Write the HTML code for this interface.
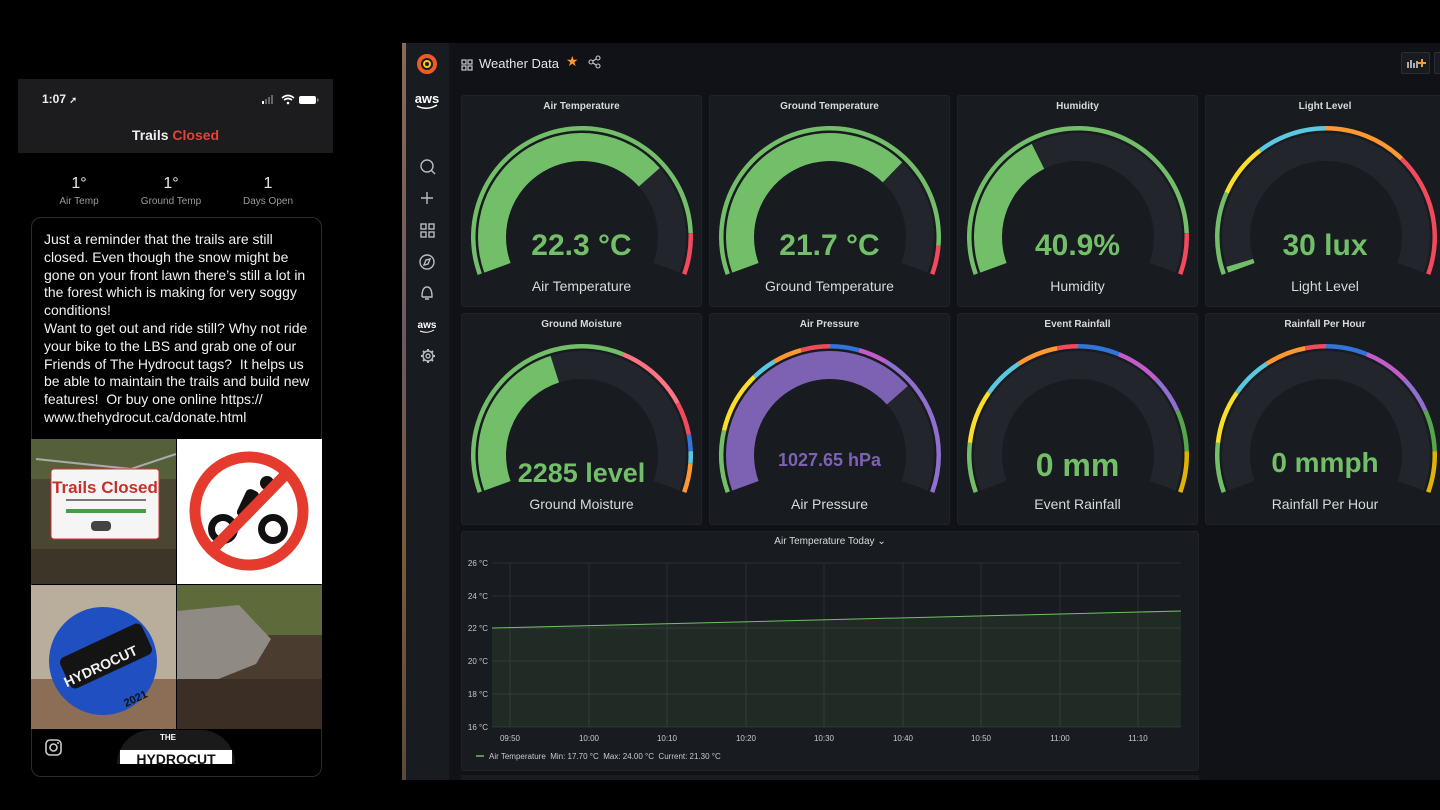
<!DOCTYPE html>
<html><head><meta charset="utf-8">
<style>
*{margin:0;padding:0;box-sizing:border-box}
body{width:1440px;height:810px;background:#000;position:relative;overflow:hidden;font-family:"Liberation Sans",sans-serif}
.abs{position:absolute}
.phone-top{left:18px;top:79px;width:315px;height:74px;background:#1c1c1e}
.stat{color:#e8e8e8;text-align:center;font-size:16px;line-height:16px}
.stat small{display:block;font-size:10px;color:#9a9a9a;margin-top:2px}
.card{left:31px;top:217px;width:291px;height:560px;border:1px solid #2c2c2e;border-radius:10px;background:#000}
.post{left:44px;top:231px;width:275px;color:#f2f2f2;font-size:14px;line-height:17.8px}
.gf{left:406px;top:43px;width:1034px;height:737px;background:#111217}
.side{left:406px;top:43px;width:43px;height:737px;background:#181b1f}
.panel{background:#181b1f;border:1px solid #202226;border-radius:3px;position:absolute}
.ptitle{position:absolute;top:5px;left:0;right:0;text-align:center;color:#d8d9da;font-size:10px;font-weight:bold}
</style></head><body>
<!-- phone -->
<div class="abs phone-top"></div>
<div class="abs" style="left:42px;top:92px;color:#eee;font-size:12px;font-weight:bold">1:07 <span style="font-size:9px">➚</span></div>
<div class="abs" style="left:262px;top:93px;">
<svg width="60" height="12"><rect x="0" y="7" width="2" height="3" fill="#fff"/><rect x="3" y="5" width="2" height="5" fill="#666"/><rect x="6" y="3" width="2" height="7" fill="#666"/><rect x="9" y="1" width="2" height="9" fill="#666"/>
<path d="M20 4 Q26 -1 32 4 M22 6 Q26 3 30 6" stroke="#fff" stroke-width="1.6" fill="none"/><circle cx="26" cy="9" r="1.3" fill="#fff"/>
<rect x="37" y="2" width="17" height="8" rx="2" fill="#fff"/><rect x="55" y="4.5" width="1.5" height="3" fill="#888"/></svg></div>
<div class="abs" style="left:18px;width:315px;top:127px;text-align:center;font-size:14px;font-weight:bold;color:#eee">Trails <span style="color:#e8403a">Closed</span></div>
<div class="abs stat" style="left:49px;width:60px;top:176px">1°<small>Air Temp</small></div>
<div class="abs stat" style="left:131px;width:80px;top:176px">1°<small>Ground Temp</small></div>
<div class="abs stat" style="left:233px;width:70px;top:176px">1<small>Days Open</small></div>
<div class="abs card"></div>
<div class="abs post">Just a reminder that the trails are still closed. Even though the snow might be gone on your front lawn there’s still a lot in the forest which is making for very soggy conditions!<br>Want to get out and ride still? Why not ride your bike to the LBS and grab one of our Friends of The Hydrocut tags?&nbsp; It helps us be able to maintain the trails and build new features!&nbsp; Or buy one online https://<br>www.thehydrocut.ca/donate.html</div>
<svg class="abs" style="left:31px;top:439px" width="291" height="290">
<rect width="145" height="145" fill="#4a4632"/><rect y="0" width="145" height="40" fill="#55603a"/><rect y="110" width="145" height="35" fill="#3d3528"/>
<path d="M5 20 L100 30 L145 15" stroke="#aaa" stroke-width="2" fill="none"/>
<rect x="20" y="30" width="108" height="70" rx="3" fill="#f5f5f5" stroke="#c33" stroke-width="1"/>
<text x="74" y="54" fill="#c8302c" font-size="17" font-weight="bold" text-anchor="middle" font-family="Liberation Sans">Trails Closed</text>
<rect x="35" y="70" width="80" height="4" fill="#4a9a4a"/><rect x="35" y="60" width="80" height="2" fill="#777"/><rect x="60" y="82" width="20" height="10" rx="4" fill="#444"/>
<rect x="146" width="145" height="145" fill="#fff"/>
<circle cx="218" cy="72" r="54" fill="none" stroke="#e53a2e" stroke-width="11"/>
<circle cx="192" cy="90" r="15" fill="#111"/><circle cx="242" cy="90" r="15" fill="#111"/><circle cx="192" cy="90" r="8" fill="#fff"/><circle cx="242" cy="90" r="8" fill="#fff"/>
<rect x="210" y="50" width="14" height="30" rx="5" fill="#111" transform="rotate(25 217 65)"/><circle cx="236" cy="44" r="7" fill="#111"/>
<line x1="180" y1="112" x2="258" y2="32" stroke="#e53a2e" stroke-width="11"/>
<rect y="146" width="145" height="144" fill="#b9ad9c"/><rect y="240" width="145" height="50" fill="#8c6e56"/>
<circle cx="72" cy="222" r="54" fill="#1f4fc0"/><rect x="30" y="200" width="90" height="34" rx="6" fill="#141414" transform="rotate(-25 75 217)"/>
<text x="70" y="232" fill="#f0f0f0" font-size="14" font-weight="bold" text-anchor="middle" transform="rotate(-25 70 228)" font-family="Liberation Sans">HYDROCUT</text>
<text x="95" y="268" fill="#111" font-size="11" font-weight="bold" transform="rotate(-25 95 268)" font-family="Liberation Sans">2021</text>
<rect x="146" y="146" width="145" height="144" fill="#4a3d30"/><rect x="146" y="146" width="145" height="50" fill="#5f6a3a"/>
<path d="M146 172 L208 166 L240 200 L225 225 L175 245 L146 240Z" fill="#8f8a84"/><rect x="146" y="240" width="145" height="50" fill="#3b2f25"/>
</svg>
<svg class="abs" style="left:44px;top:738px" width="20" height="20"><rect x="2" y="2" width="15" height="15" rx="4" fill="none" stroke="#ccc" stroke-width="1.6"/><circle cx="9.5" cy="9.5" r="3.5" fill="none" stroke="#ccc" stroke-width="1.6"/><circle cx="14" cy="5" r="1" fill="#ccc"/></svg>
<div class="abs" style="left:117px;top:730px;width:118px;height:34px;background:#1a1a1a;border-radius:40px 40px 0 0"></div>
<div class="abs" style="left:160px;top:733px;color:#fff;font-size:8px;font-weight:bold">THE</div>
<div class="abs" style="left:120px;top:750px;width:112px;height:14px;background:#fff;color:#111;font-size:14px;font-weight:bold;text-align:center;line-height:18px;overflow:hidden">HYDROCUT</div>

<!-- grafana -->
<div class="abs" style="left:402px;top:43px;width:4px;height:737px;background:linear-gradient(#8a6a55,#6a5a60 40%,#7b5a3a 70%,#5a4a3a)"></div>
<div class="abs gf"></div>
<div class="abs side"></div>
<svg class="abs" style="left:406px;top:43px" width="43" height="330">
<circle cx="21" cy="21" r="8" fill="none" stroke="#f05a28" stroke-width="4"/><circle cx="21" cy="21" r="3" fill="none" stroke="#fbca0a" stroke-width="2"/>
<text x="21" y="60" fill="#fff" font-size="13" font-weight="bold" text-anchor="middle" font-family="Liberation Sans">aws</text>
<path d="M11 63 Q21 68 31 62" stroke="#fff" stroke-width="1.5" fill="none"/>
<g stroke="#b9bcc2" stroke-width="1.4" fill="none">
<circle cx="21" cy="123" r="6"/><line x1="25.5" y1="127.5" x2="29" y2="131"/>
<path d="M21 149 V161 M15 155 H27"/>
<rect x="15" y="181" width="5" height="5"/><rect x="23" y="181" width="5" height="5"/><rect x="15" y="189" width="5" height="5"/><rect x="23" y="189" width="5" height="5"/>
<circle cx="21" cy="219" r="7"/><path d="M24 216 L22 221 L18 222 L20 217Z"/>
<path d="M16 254 Q16 244 21 244 Q26 244 26 254 H16 M19 256 H23"/>
<circle cx="22" cy="313" r="5"/><circle cx="22" cy="313" r="2"/>
<path d="M22 306 V308 M22 318 V320 M15 313 H17 M27 313 H29 M17 308 L18.5 309.5 M25.5 316.5 L27 318 M27 308 L25.5 309.5 M18.5 316.5 L17 318" stroke-width="2"/>
</g>
<text x="21" y="285" fill="#fff" font-size="10" font-weight="bold" text-anchor="middle" font-family="Liberation Sans">aws</text>
<path d="M14 288 Q21 291 28 287" stroke="#fff" stroke-width="1" fill="none"/>
</svg>
<svg class="abs" style="left:460px;top:58px" width="14" height="14"><g fill="none" stroke="#c7c9cd" stroke-width="1.2"><rect x="2" y="2" width="4" height="4"/><rect x="8" y="2" width="4" height="4"/><rect x="2" y="8" width="4" height="4"/><rect x="8" y="8" width="4" height="4"/></g></svg>
<div class="abs" style="left:479px;top:56px;color:#e4e5e7;font-size:13px">Weather Data</div>
<div class="abs" style="left:566px;top:53px;color:#ff9830;font-size:14px">★</div>
<svg class="abs" style="left:588px;top:55px" width="14" height="14"><g fill="none" stroke="#c7c9cd" stroke-width="1.1"><circle cx="3" cy="7" r="2"/><circle cx="10" cy="3" r="2"/><circle cx="10" cy="11" r="2"/><path d="M5 6 L8 4 M5 8 L8 10"/></g></svg>
<div class="abs" style="left:1401px;top:52px;width:29px;height:22px;border:1px solid #2a2d33;border-radius:2px;background:#181b1f"></div>
<div class="abs" style="left:1434px;top:52px;width:10px;height:22px;border:1px solid #2a2d33;border-radius:2px;background:#181b1f"></div>
<svg class="abs" style="left:1406px;top:57px" width="20" height="12"><g fill="#aaa"><rect x="1" y="5" width="2" height="6"/><rect x="4" y="3" width="2" height="8"/><rect x="7" y="6" width="2" height="5"/><rect x="10" y="4" width="2" height="7"/></g><path d="M16 2 V10 M12 6 H20" stroke="#ff9830" stroke-width="2"/></svg>

<div id="gauges"></div>

<!-- graph -->
<div class="panel" style="left:461px;top:531px;width:738px;height:240px"></div>
<div class="abs" style="left:461px;width:738px;top:536px;text-align:center;color:#d8d9da;font-size:10px">Air Temperature Today ⌄</div>
<svg class="abs" style="left:461px;top:531px" width="738" height="240">
<g stroke="#2c2e33" stroke-width="1">
<line x1="31" y1="32" x2="720" y2="32"/><line x1="31" y1="65" x2="720" y2="65"/><line x1="31" y1="97" x2="720" y2="97"/><line x1="31" y1="130" x2="720" y2="130"/><line x1="31" y1="163" x2="720" y2="163"/><line x1="31" y1="196" x2="720" y2="196"/>
<line x1="49" y1="32" x2="49" y2="196"/><line x1="128" y1="32" x2="128" y2="196"/><line x1="206" y1="32" x2="206" y2="196"/><line x1="285" y1="32" x2="285" y2="196"/><line x1="363" y1="32" x2="363" y2="196"/><line x1="442" y1="32" x2="442" y2="196"/><line x1="520" y1="32" x2="520" y2="196"/><line x1="599" y1="32" x2="599" y2="196"/><line x1="677" y1="32" x2="677" y2="196"/>
</g>
<path d="M31 97 L720 80 L720 196 L31 196Z" fill="#73bf69" fill-opacity="0.1"/>
<path d="M31 97 L720 80" stroke="#73bf69" stroke-width="1"/>
<g fill="#c7c9cd" font-size="8" font-family="Liberation Sans" text-anchor="end">
<text x="27" y="35">26 °C</text><text x="27" y="68">24 °C</text><text x="27" y="100">22 °C</text><text x="27" y="133">20 °C</text><text x="27" y="166">18 °C</text><text x="27" y="199">16 °C</text></g>
<g fill="#c7c9cd" font-size="8" font-family="Liberation Sans" text-anchor="middle">
<text x="49" y="210">09:50</text><text x="128" y="210">10:00</text><text x="206" y="210">10:10</text><text x="285" y="210">10:20</text><text x="363" y="210">10:30</text><text x="442" y="210">10:40</text><text x="520" y="210">10:50</text><text x="599" y="210">11:00</text><text x="677" y="210">11:10</text></g>
<line x1="15" y1="225" x2="23" y2="225" stroke="#73bf69" stroke-width="1.5"/>
<text x="28" y="228" fill="#c7c9cd" font-size="8" font-family="Liberation Sans">Air Temperature&#160; Min: 17.70 °C&#160; Max: 24.00 °C&#160; Current: 21.30 °C</text>
</svg>
<div class="abs" style="left:461px;top:775px;width:738px;height:5px;background:#181b1f"></div>

<script>
var G="#73bf69",R="#f2495c",Y="#fade2a",C="#5ac8e0",O="#ff9830",B="#3274d9",M="#c15cc8",P="#8f6fcf",PK="#ff7383",DG="#56a64b",DY="#e0b400";
var rain=[[.12,G],[.25,Y],[.35,C],[.45,O],[.5,R],[.6,B],[.71,M],[.8,P],[.9,DG],[1,DY]];
var gs=[
[461,95,"Air Temperature","22.3 °C",G,.72,[[.9,G],[1,R]],30,"Air Temperature",0],
[709,95,"Ground Temperature","21.7 °C",G,.70,[[.93,G],[1,R]],30,"Ground Temperature",0],
[957,95,"Humidity","40.9%",G,.38,[[.9,G],[1,R]],30,"Humidity",0],
[1205,95,"Light Level","30 lux",G,.015,[[.2,G],[.33,Y],[.5,C],[.7,O],[1,R]],30,"Light Level",0],
[461,313,"Ground Moisture","2285 level",G,.42,[[.6,G],[.78,PK],[.86,R],[.9,B],[.93,C],[1,O]],27,"Ground Moisture",9],
[709,313,"Air Pressure","1027.65 hPa","#7d62b3",.72,[[.15,G],[.3,Y],[.36,C],[.43,O],[.5,R],[.57,B],[.64,M],[1,P]],18,"Air Pressure",-4],
[957,313,"Event Rainfall","0 mm",G,0,rain,32,"Event Rainfall",1],
[1205,313,"Rainfall Per Hour","0 mmph",G,0,rain,28,"Rainfall Per Hour",-1]
];
function pt(cx,cy,r,t){var a=(200-220*t)*Math.PI/180;return [cx+r*Math.cos(a),cy-r*Math.sin(a)];}
function sec(cx,cy,r1,r2,t0,t1,col){var a=pt(cx,cy,r2,t0),b=pt(cx,cy,r2,t1),c=pt(cx,cy,r1,t1),d=pt(cx,cy,r1,t0);var l=(t1-t0)*220>180?1:0;
return '<path d="M'+a+' A'+r2+' '+r2+' 0 '+l+' 1 '+b+' L'+c+' A'+r1+' '+r1+' 0 '+l+' 0 '+d+'Z" fill="'+col+'"/>';}
var h="";
gs.forEach(function(g){var x=g[0],y=g[1],w=(x==1205?240:241);
var cx=121,cy=142,s='<svg class="abs" style="left:'+x+'px;top:'+y+'px" width="'+w+'" height="212">';
s+=sec(cx,cy,76,104,0,1,"#22252b");
if(g[5]>0)s+=sec(cx,cy,76,104,0,g[5],g[4]);
var t0=0;g[6].forEach(function(q){s+=sec(cx,cy,106.5,111,t0,q[0],q[1]);t0=q[0];});
s+='</svg>';
h+='<div class="panel" style="left:'+x+'px;top:'+y+'px;width:'+w+'px;height:212px"><div class="ptitle">'+g[2]+'</div></div>'+s;
var vy=y+151-g[7]/2+g[9];
h+='<div class="abs" style="left:'+x+'px;width:'+w+'px;top:'+vy+'px;text-align:center;color:'+g[4]+';font-size:'+g[7]+'px;line-height:'+g[7]+'px;font-weight:bold">'+g[3]+'</div>';
h+='<div class="abs" style="left:'+x+'px;width:'+w+'px;top:'+(y+183)+'px;text-align:center;color:#d8d9da;font-size:14px">'+g[8]+'</div>';
});
document.getElementById("gauges").innerHTML=h;
</script>
</body></html>
